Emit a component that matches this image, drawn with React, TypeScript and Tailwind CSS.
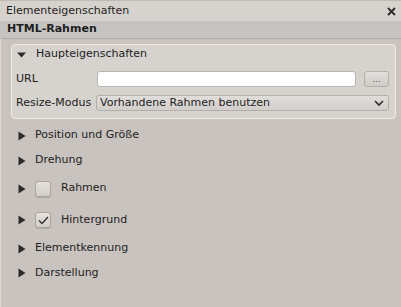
import React from "react";

const font = { fontFamily: '"DejaVu Sans", "Liberation Sans", sans-serif' };

function TriRight() {
  return (
    <svg width="8" height="10" viewBox="0 0 8 10" className="shrink-0">
      <path d="M0.5 0.5 L7.5 5 L0.5 9.5 Z" fill="#2b2b2b" />
    </svg>
  );
}

function TriDown() {
  return (
    <svg width="9" height="6" viewBox="0 0 9 6" className="shrink-0">
      <path d="M0 0.5 L9 0.5 L4.5 5.5 Z" fill="#2b2b2b" />
    </svg>
  );
}

function Checkbox({ checked }: { checked?: boolean }) {
  return (
    <div className="flex h-4 w-4 shrink-0 items-center justify-center rounded-[3px] border border-[#a8a4a0] bg-gradient-to-b from-[#e4e1de] to-[#d2ceca] shadow-[0_1px_0_rgba(0,0,0,0.12)]">
      {checked && (
        <svg width="11" height="9" viewBox="0 0 11 9">
          <path d="M1 4.5 L4 7.5 L10 1" fill="none" stroke="#303030" strokeWidth="1.4" />
        </svg>
      )}
    </div>
  );
}

function Section({ label, check, h }: { label: string; check?: "on" | "off"; h: string }) {
  return (
    <div className={`flex items-center gap-[9px] pl-[7px] ${h}`}>
      <TriRight />
      {check ? (
        <div className="flex items-center gap-[10px]">
          <Checkbox checked={check === "on"} />
          <span>{label}</span>
        </div>
      ) : (
        <span>{label}</span>
      )}
    </div>
  );
}

export default function App() {
  return (
    <div className="flex h-[307px] w-[401px] flex-col overflow-hidden bg-[#c8c3bf] text-[11px] text-[#1e1e1e]" style={font}>
      <div className="flex h-[21px] shrink-0 items-center justify-between border-t border-[#bdb9b5] bg-[#d6d2ce] pl-[6px] pr-[4px]">
        <span>Elementeigenschaften</span>
        <svg width="9" height="9" viewBox="0 0 9 9" className="mr-[1px]">
          <path d="M1 1 L8 8 M8 1 L1 8" stroke="#2a2a2a" strokeWidth="1.8" />
        </svg>
      </div>
      <div className="flex h-[17px] shrink-0 items-center bg-[#c6c4c2] pl-[7px] font-bold">HTML-Rahmen</div>
      <div className="flex flex-1 flex-col border-l border-t border-l-[#dedad6] border-t-[#aeaaa6] pl-[10px] pr-[5px] pt-[5px]">
        <div className="flex h-[75px] flex-col rounded-[4px] border border-[#eeebe8] bg-[#d6d2ce]">
          <div className="flex h-[16px] items-center gap-[10px] pl-[5px] pt-[3px]">
            <TriDown />
            <span>Haupteigenschaften</span>
          </div>
          <div className="mt-[10px] flex h-[16px] items-center pl-[4px] pr-[6px]">
            <span className="w-[81px]">URL</span>
            <div className="h-[16px] flex-1 rounded-[3px] border border-[#b9b5b1] bg-white" />
            <div className="ml-[8px] flex h-[16px] w-[25px] items-end justify-center rounded-[3px] border border-[#b3afab] bg-gradient-to-b from-[#e2dfdc] to-[#d0ccc8] pb-[2px] text-[9px] leading-none text-[#555]">
              ...
            </div>
          </div>
          <div className="mt-[8px] flex h-[16px] items-center pl-[4px] pr-[6px]">
            <span className="w-[80px] whitespace-nowrap">Resize-Modus</span>
            <div className="flex h-[16px] flex-1 items-center justify-between rounded-[3px] border border-[#b3afab] bg-gradient-to-b from-[#e0ddda] to-[#d2cecb] pl-[3px] pr-[4px]">
              <span>Vorhandene Rahmen benutzen</span>
              <svg width="10" height="6" viewBox="0 0 10 6">
                <path d="M1 1 L5 5 L9 1" fill="none" stroke="#2a2a2a" strokeWidth="1.6" />
              </svg>
            </div>
          </div>
        </div>
        <div className="mt-[4px] flex flex-col">
          <Section h="h-[25px]" label="Position und Größe" />
          <Section h="h-[25px]" label="Drehung" />
          <Section h="h-[31px]" label="Rahmen" check="off" />
          <Section h="h-[32px]" label="Hintergrund" check="on" />
          <Section h="h-[25px]" label="Elementkennung" />
          <Section h="h-[24px]" label="Darstellung" />
        </div>
      </div>
    </div>
  );
}
